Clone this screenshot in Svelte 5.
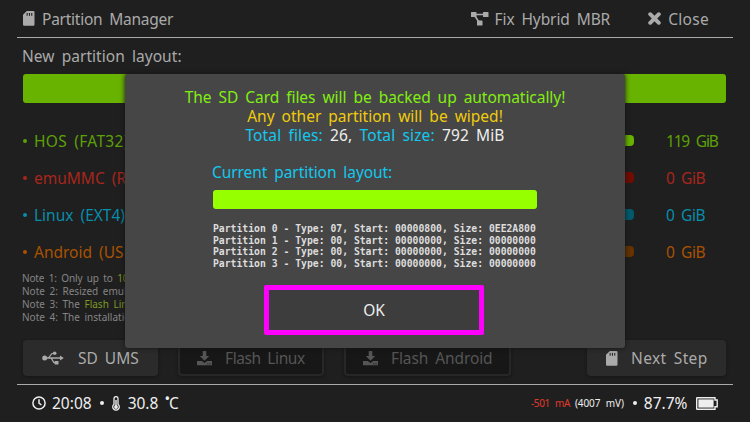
<script>
  const partitions = [
    { name: 'HOS (FAT32):', size: '119 GiB', tone: 'green' },
    { name: 'emuMMC (RAW):', size: '0 GiB', tone: 'red' },
    { name: 'Linux (EXT4):', size: '0 GiB', tone: 'cyan' },
    { name: 'Android (USER):', size: '0 GiB', tone: 'orange' }
  ];
  const table = [
    { type: '07', start: '00000800', size: '0EE2A800' },
    { type: '00', start: '00000000', size: '00000000' },
    { type: '00', start: '00000000', size: '00000000' },
    { type: '00', start: '00000000', size: '00000000' }
  ];
</script>

{#snippet sdCard()}
  <svg class="sd" width="12" height="15" viewBox="0 0 12 15">
    <path fill-rule="evenodd" d="M3.8 0H10.5Q11.5 0 11.5 1.2V13.5Q11.5 14.7 10.3 14.7H1.2Q0 14.7 0 13.5V3.8ZM3.6 2V4.8H4.7V2ZM5.9 2V4.8H7V2ZM8.2 2V4.8H9.3V2Z" />
  </svg>
{/snippet}

{#snippet download()}
  <svg width="15" height="15" viewBox="0 0 15 15">
    <path fill-rule="evenodd" d="M5.7 0H9.3V5H12.2L7.5 9.8L2.8 5H5.7ZM0 10H4.8L7.5 12L10.2 10H15V14.3H0ZM10.3 12.2V13.2H11.3V12.2ZM12.5 12.2V13.2H13.5V12.2Z" />
  </svg>
{/snippet}

<div class="screen">
  <header>
    <div class="title">{@render sdCard()}<span>Partition Manager</span></div>
    <div class="fix">
      <svg width="18" height="14" viewBox="0 0 18 14">
        <path d="M.6 0H4.9Q5.5 0 5.5 .6V4.4Q5.5 5 4.9 5H.6Q0 5 0 4.4V.6Q0 0 .6 0ZM12.6 0H16.9Q17.5 0 17.5 .6V4.4Q17.5 5 16.9 5H12.6Q12 5 12 4.4V.6Q12 0 12.6 0ZM6.6 8.5H10.9Q11.5 8.5 11.5 9.1V12.9Q11.5 13.5 10.9 13.5H6.6Q6 13.5 6 12.9V9.1Q6 8.5 6.6 8.5Z" />
        <path d="M4 2.5H13M3.5 3.5L8 10" fill="none" stroke="currentColor" stroke-width="1.6" />
      </svg>
      <span>Fix Hybrid MBR</span>
    </div>
    <div class="close">
      <svg width="13" height="13" viewBox="0 0 13 13">
        <path d="M2.2 2.2L10.8 10.8M10.8 2.2L2.2 10.8" fill="none" stroke="currentColor" stroke-width="3.9" stroke-linecap="round" />
      </svg>
      <span>Close</span>
    </div>
  </header>

  <main>
    <h2>New partition layout:</h2>
    <div class="layout-bar"></div>
    <ul class="partitions">
      {#each partitions as p}
        <li class={p.tone}>
          <i></i><span class="name">{p.name}</span>
          <b></b>
          <span class="size">{p.size}</span>
        </li>
      {/each}
    </ul>
    <div class="notes">
      <p class="first">Note 1: Only up to <em>1000 GB</em></p>
      <p>Note 2: Resized emuMMC</p>
      <p>Note 3: The <em>Flash Linux</em></p>
      <p>Note 4: The installation</p>
    </div>
    <div class="actions">
      <button class="ums">
        <svg width="22" height="14" viewBox="0 0 22 14">
          <circle cx="2.7" cy="7" r="2.5" />
          <circle cx="12.7" cy="2.2" r="1.8" />
          <path d="M12.7 10H16.5V13.6H12.7ZM18 4.6L21.8 7L18 9.4Z" />
          <path d="M3 7H19M5.5 7C8.5 7 7.5 2.2 12 2.2M8.5 7C11 7 10 11.8 13 11.8" fill="none" stroke="currentColor" stroke-width="1.3" />
        </svg>
        <span>SD UMS</span>
      </button>
      <button class="linux off">{@render download()}<span>Flash Linux</span></button>
      <button class="android off">{@render download()}<span>Flash Android</span></button>
      <button class="next">{@render sdCard()}<span>Next Step</span></button>
    </div>
  </main>

  <footer>
    <svg class="clock" width="14" height="14" viewBox="0 0 14 14">
      <circle cx="7" cy="7" r="6.1" fill="none" stroke="currentColor" stroke-width="1.5" />
      <path d="M7 3.2V7.2L9.4 9" fill="none" stroke="currentColor" stroke-width="1.5" />
    </svg>
    <span class="time">20:08</span>
    <i></i>
    <svg class="thermo" width="8" height="15" viewBox="0 0 8 15">
      <path d="M2 8.2V2.6A2 2 0 0 1 6 2.6V8.2A3.3 3.3 0 1 1 2 8.2Z" fill="none" stroke="currentColor" stroke-width="1.3" />
      <path d="M4 4V11" fill="none" stroke="currentColor" stroke-width="1.4" />
      <circle cx="4" cy="11" r="1.9" />
    </svg>
    <span class="temp">30.8 <small>•</small>C</span>
    <span class="spacer"></span>
    <span class="amps">-501 mA</span>
    <span class="volts">(4007 mV)</span>
    <i></i>
    <span class="charge">87.7%</span>
    <svg class="battery" width="22" height="13" viewBox="0 0 22 13">
      <path d="M1.2 .7H19V3H21.2V9.8H19V12.2H1.2Q.7 12.2 .7 11.7V1.2Q.7 .7 1.2 .7Z" fill="none" stroke="currentColor" stroke-width="1.4" />
      <path d="M2.4 2.4H17.6V10.6H2.4Z" />
    </svg>
  </footer>

  <section class="dialog">
    <p class="l1">The SD Card files will be backed up automatically!</p>
    <p class="l2">Any other partition will be wiped!</p>
    <p class="l3">Total files: <strong>26,</strong> Total size: <strong>792 MiB</strong></p>
    <h3>Current partition layout:</h3>
    <div class="current-bar"></div>
    <pre>{table.map((r, n) => `Partition ${n} - Type: ${r.type}, Start: ${r.start}, Size: ${r.size}`).join('\n')}</pre>
    <button class="ok"><span>OK</span></button>
  </section>
</div>

<style>
  .screen {
    position: relative;
    box-sizing: border-box;
    width: 750px;
    height: 422px;
    padding: 0 17px;
    display: flex;
    flex-direction: column;
    overflow: hidden;
    background: #1f1f1f;
    color: #aaa;
    font: 15.5px/20px 'Noto Sans', 'Open Sans', sans-serif;
    word-spacing: 3px;
    white-space: nowrap;
  }
  svg { flex: none; fill: currentColor; }
  p, h2, h3, ul, pre { margin: 0; padding: 0; font-weight: inherit; }
  h2, h3 { font-size: inherit; }
  em { font-style: normal; color: #7d9a24; }

  header {
    flex: none;
    box-sizing: border-box;
    height: 38px;
    display: flex;
    align-items: center;
    padding: 0 24px 0 6px;
    border-bottom: 1px solid #aaa;
  }
  header div { display: flex; align-items: center; }
  .title { gap: 7px; margin-right: auto; letter-spacing: -.25px; }
  .fix { gap: 6px; margin-right: 38px; letter-spacing: -.1px; }
  .close { gap: 7px; letter-spacing: .3px; }

  main { flex: none; height: 346px; box-sizing: border-box; padding: 8px 7px 0 6px; }
  h2 { height: 28px; margin-left: -1px; letter-spacing: .05px; }
  .layout-bar { height: 29px; border-radius: 3px; background: #68b200; }
  .partitions { list-style: none; padding-top: 19px; }
  li { display: flex; align-items: center; height: 37px; }
  i { flex: none; width: 4px; height: 4px; border-radius: 50%; background: currentColor; }
  li .name { flex: none; width: 166px; margin-left: 7px; }
  li b { flex: none; width: 433.5px; height: 11px; border-radius: 4px; margin-right: 32.5px; background: currentColor; }
  li.green { color: #5ea008; }
  li.green .name { letter-spacing: .3px; }
  .size { letter-spacing: -.4px; }
  li.green .size { letter-spacing: -1.2px; word-spacing: 4px; }
  li.green b { background: #68b200; }
  li.red { color: #a8261c; }
  li.red b { background: #720b00; }
  li.cyan { color: #088daa; }
  li.cyan b { background: #005a6d; }
  li.orange { color: #aa5200; }
  li.orange b { background: #653200; }

  .notes { margin: 2px 0 0 -1px; font-size: 10px; line-height: 13px; color: #858585; word-spacing: 2px; }
  .notes .first { letter-spacing: -.15px; }
  .actions { display: flex; align-items: flex-start; margin-top: 16px; }
  button {
    box-sizing: border-box;
    display: flex;
    align-items: center;
    height: 36px;
    padding: 0;
    border: 0;
    border-radius: 4px;
    background: #2b2b2b;
    box-shadow: 0 1px 3px #151515;
    color: inherit;
    font: inherit;
    word-spacing: inherit;
  }
  .ums { width: 135px; padding-left: 19px; gap: 14px; margin-right: 20px; }
  .off { border: 2px solid #272727; background: #171717; color: #555; padding-left: 17px; gap: 13px; }
  .linux { width: 146px; margin-right: 20px; letter-spacing: -.4px; }
  .android { width: 167px; margin-right: 76px; letter-spacing: -.1px; }
  .next { width: 139px; padding-left: 19px; gap: 13px; letter-spacing: .35px; }

  footer {
    flex: 1;
    display: flex;
    align-items: center;
    padding: 0 15.5px 1px 15px;
    border-top: 1px solid #aaa;
    color: #eee;
  }
  .time { margin: 0 8px 0 6px; }
  .thermo { margin: 0 8px 0 8px; }
  .spacer { flex: 1; }
  .temp small { margin: 0 -1px 0 -1px; font-size: 15px; line-height: 1px; vertical-align: 5px; }
  .amps, .volts { font-size: 10px; }
  .amps { color: #e03a2c; margin-right: 5px; letter-spacing: -.4px; }
  .volts { margin-right: 9px; letter-spacing: -.1px; }
  .charge { margin: 0 8px 0 7px; }

  .dialog {
    position: absolute;
    left: 125px;
    top: 74px;
    box-sizing: border-box;
    width: 500px;
    height: 274px;
    padding: 14px 0 0;
    border-radius: 3px;
    background: #464646;
    box-shadow: 0 0 5px #151515;
    text-align: center;
  }
  .dialog p { line-height: 18.8px; }
  .l1 { color: #82ee12; letter-spacing: -.04px; }
  .l2 { color: #f0cb0c; }
  .l3, h3 { color: #12c8ee; }
  .l3 { letter-spacing: .13px; }
  strong { font-weight: inherit; color: #eee; }
  h3 { margin: 17.6px 0 8px 87px; text-align: left; letter-spacing: -.07px; }
  .current-bar { height: 19px; margin: 0 88px; border-radius: 3px; background: #96ff00; }
  pre {
    margin: 14px 0 0 88px;
    color: #ddd;
    font: bold 9.76px/11.7px 'DejaVu Sans Mono', monospace;
    word-spacing: 0;
    text-align: left;
  }
  .ok {
    justify-content: center;
    width: 220px;
    height: 50px;
    margin: 15.2px 0 0 139px;
    border: 5px solid #f0f;
    border-radius: 2px;
    background: #3d3d3d;
    box-shadow: none;
    color: #eee;
  }
</style>
